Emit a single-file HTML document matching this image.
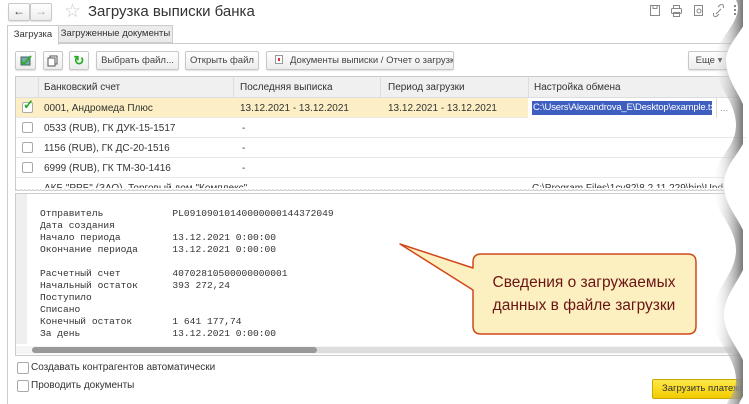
<!DOCTYPE html>
<html><head><meta charset="utf-8">
<style>
*{margin:0;padding:0;box-sizing:border-box;white-space:nowrap}
body{width:749px;height:404px;overflow:hidden;background:#fff;font-family:"Liberation Sans",sans-serif;font-size:10px;color:#333;position:relative}
.a{position:absolute}
.btn{position:absolute;height:19px;border:1px solid #c8c8c8;border-radius:2px;background:linear-gradient(#fff,#ececec);font-size:9.5px;color:#444;line-height:17px;text-align:center;box-shadow:0 1px 1px rgba(0,0,0,.12);overflow:hidden}
.row{position:absolute;left:16px;width:730px;height:20px;border-bottom:1px solid #e8e8e8;font-size:10px;line-height:22px}
.cb{position:absolute;width:11px;height:11px;border:1px solid #aaa;border-radius:2px;background:#fff}
.mono{position:absolute;left:40px;font-family:"Liberation Mono",monospace;font-size:9.6px;color:#333;line-height:12px;white-space:pre}
</style></head><body>
<div class="btn" style="left:8px;top:3px;width:22px;height:18px;font-size:12px;line-height:15px">&#8592;</div>
<div class="btn" style="left:30px;top:3px;width:22px;height:18px;font-size:12px;line-height:15px;color:#aaa">&#8594;</div>
<div class="a" style="left:64px;top:0px;font-size:19px;color:#ccc">&#9734;</div>
<div class="a" style="left:88px;top:3px;font-size:15px;color:#333">Загрузка выписки банка</div>
<svg class="a" style="left:648px;top:4px" width="90" height="14"><g fill="none" stroke="#888" stroke-width="1"><rect x="2.5" y="1.5" width="9" height="10"/><rect x="5" y="1.5" width="4" height="3"/><rect x="23.5" y="4.5" width="10" height="5" rx="1"/><rect x="25.5" y="1.5" width="6" height="3"/><rect x="25.5" y="8.5" width="6" height="4"/><rect x="46.5" y="1.5" width="8" height="10"/><circle cx="51" cy="7" r="2"/><path d="M68 10l5-5M66 9a2 2 0 0 0 3 3l2-2M75 4a2 2 0 0 0-3-3l-2 2"/></g><g fill="#888"><rect x="86" y="1" width="2" height="2"/><rect x="86" y="5" width="2" height="2"/><rect x="86" y="9" width="2" height="2"/></g></svg>
<div class="a" style="left:7px;top:25px;width:52px;height:20px;border:1px solid #ccc;border-bottom:none;background:#fff;font-size:9.5px;line-height:18px;text-align:center">Загрузка</div>
<div class="a" style="left:58px;top:25px;width:115px;height:18px;border:1px solid #ccc;background:#ebebeb;font-size:9.5px;line-height:16px;text-align:center">Загруженные документы</div>
<div class="a" style="left:58px;top:43px;width:691px;height:1px;background:#ccc"></div>
<div class="a" style="left:7px;top:44px;width:1px;height:360px;background:#ccc"></div>
<div class="btn" style="left:15px;top:51px;width:21px"><svg width="19" height="17"><rect x="5" y="5" width="9" height="8" fill="#7aa" stroke="#466"/><path d="M5 9l3 3 7-8" stroke="#3a3" stroke-width="2" fill="none"/></svg></div>
<div class="btn" style="left:43px;top:51px;width:20px"><svg width="18" height="17"><rect x="6" y="4" width="7" height="8" fill="#fff" stroke="#555"/><rect x="4" y="6" width="7" height="8" fill="#fff" stroke="#555"/></svg></div>
<div class="btn" style="left:69px;top:51px;width:20px;color:#2a2;font-weight:bold;font-size:13px">&#8635;</div>
<div class="btn" style="left:96px;top:51px;width:83px">Выбрать файл...</div>
<div class="btn" style="left:185px;top:51px;width:74px">Открыть файл</div>
<div class="btn" style="left:266px;top:51px;width:188px;text-align:left;padding-left:8px"><span style="display:inline-block;width:8px;height:9px;border:1px solid #999;background:#fff;vertical-align:-1px;margin-right:7px;box-shadow:inset 0 0 0 2px #fff,inset 0 0 0 4px #d33"></span>Документы выписки / Отчет о загрузке</div>
<div class="btn" style="left:688px;top:51px;width:42px">Еще ▾</div>
<div class="a" style="left:15px;top:76px;width:734px;height:115px;border:1px solid #ccc;border-right:none"></div>
<div class="a" style="left:16px;top:77px;width:733px;height:21px;background:#f0f0f0;border-bottom:1px solid #ddd;font-size:10px;line-height:21px">
<span class="a" style="left:28px">Банковский счет</span><span class="a" style="left:224px">Последняя выписка</span><span class="a" style="left:372px">Период загрузки</span><span class="a" style="left:518px">Настройка обмена</span></div>
<div class="a" style="left:38px;top:77px;width:1px;height:21px;background:#ddd"></div>
<div class="a" style="left:233px;top:77px;width:1px;height:21px;background:#ddd"></div>
<div class="a" style="left:380px;top:77px;width:1px;height:21px;background:#ddd"></div>
<div class="a" style="left:528px;top:77px;width:1px;height:21px;background:#ddd"></div>
<div class="row" style="top:98px;background:#fcefc6"><div class="a" style="left:512px;top:0;width:218px;height:20px;background:#fff"></div>
<span class="cb" style="left:6px;top:4px"></span><span class="a" style="left:7px;top:-4px;color:#2a2;font-size:13px;font-weight:bold">&#10003;</span>
<span class="a" style="left:28px">0001, Андромеда Плюс</span><span class="a" style="left:224px">13.12.2021 - 13.12.2021</span><span class="a" style="left:372px">13.12.2021 - 13.12.2021</span>
<span class="a" style="left:516px;top:3px;width:180px;overflow:hidden;height:14px;line-height:14px;background:#3f5fc0;color:#fff;padding:0 1px;font-size:9.5px;letter-spacing:-0.2px">C:\Users\Alexandrova_E\Desktop\example.txt</span>
<span class="a" style="left:700px;top:0;width:1px;height:20px;background:#ddd"></span><span class="a" style="left:704px;color:#999">...</span></div>
<div class="row" style="top:118px"><span class="cb" style="left:6px;top:4px"></span><span class="a" style="left:28px">0533 (RUB), ГК ДУК-15-1517</span><span class="a" style="left:226px">-</span></div>
<div class="row" style="top:138px"><span class="cb" style="left:6px;top:4px"></span><span class="a" style="left:28px">1156 (RUB), ГК ДС-20-1516</span><span class="a" style="left:226px">-</span></div>
<div class="row" style="top:158px"><span class="cb" style="left:6px;top:4px"></span><span class="a" style="left:28px">6999 (RUB), ГК ТМ-30-1416</span><span class="a" style="left:226px">-</span></div>
<div class="a" style="left:16px;top:178px;width:730px;height:10px;overflow:hidden;font-size:10px;line-height:22px"><span class="a" style="left:28px">АКБ "РРБ" (ЗАО), Торговый дом "Комплекс"</span><span class="a" style="left:516px">C:\Program Files\1cv82\8.2.11.229\bin\Update_1с.txt</span></div>
<div class="a" style="left:16px;top:189px;width:730px;height:0;border-top:2px dotted #ddd"></div>
<div class="a" style="left:15px;top:193px;width:734px;height:163px;border:1px solid #ccc;border-right:none"></div>
<div class="a" style="left:16px;top:194px;width:11px;height:150px;background:#efefef"></div>
<div class="mono" style="top:208px">Отправитель            PL09109010140000000144372049
Дата создания
Начало периода         13.12.2021 0:00:00
Окончание периода      13.12.2021 0:00:00

Расчетный счет         40702810500000000001
Начальный остаток      393 272,24
Поступило
Списано
Конечный остаток       1 641 177,74
За день                13.12.2021 0:00:00</div>
<div class="a" style="left:16px;top:346px;width:730px;height:8px;background:#f5f5f5"></div>
<div class="a" style="left:32px;top:347px;width:700px;height:6px;border-radius:3px;background:#ddd"></div>
<div class="a" style="left:32px;top:347px;width:285px;height:6px;border-radius:3px;background:#999"></div>
<span class="cb" style="left:17px;top:362px;width:12px;height:12px"></span><span class="a" style="left:31px;top:362px;font-size:10px">Создавать контрагентов автоматически</span>
<span class="cb" style="left:17px;top:380px;width:12px;height:12px"></span><span class="a" style="left:31px;top:380px;font-size:10px">Проводить документы</span>
<div class="a" style="left:652px;top:379px;width:90px;height:20px;border:1px solid #c9a800;border-radius:2px;background:linear-gradient(#ffe94a,#f2cc00);font-size:9.5px;line-height:18px;padding-left:9px;color:#333;overflow:hidden">Загрузить платежи</div>
<svg class="a" style="left:0;top:0" width="749" height="404">
<path d="M481 254 H688 Q696 254 696 262 V326 Q696 334 688 334 H481 Q473 334 473 326 V290 L400 244 L473 268 V262 Q473 254 481 254 Z" fill="#fdf0c0" stroke="#d0481a" stroke-width="1.5" stroke-linejoin="round"/>
<text x="584" y="287" font-family="Liberation Sans,sans-serif" font-size="15.5" fill="#6a1414" text-anchor="middle">Сведения о загружаемых</text>
<text x="584" y="310" font-family="Liberation Sans,sans-serif" font-size="15.5" fill="#6a1414" text-anchor="middle">данных  в файле загрузки</text>
<defs><linearGradient id="sh" x1="0" x2="1"><stop offset="0" stop-color="#fff" stop-opacity="0"/><stop offset="1" stop-color="#777"/></linearGradient></defs>
<path d="M742 0 C752 20 720 40 720 60 C720 85 742 100 742 125 C742 150 718 160 718 185 C718 210 742 225 742 250 C742 275 718 290 718 315 C718 340 742 355 742 380 C742 392 735 398 733 404 L749 404 L749 0 Z" fill="url(#sh)" transform="translate(-6,0)"/>
<path d="M742 0 C752 20 720 40 720 60 C720 85 742 100 742 125 C742 150 718 160 718 185 C718 210 742 225 742 250 C742 275 718 290 718 315 C718 340 742 355 742 380 C742 392 735 398 733 404 L749 404 L749 0 Z" fill="#fff" transform="translate(6,0)"/>
</svg>
</body></html>
